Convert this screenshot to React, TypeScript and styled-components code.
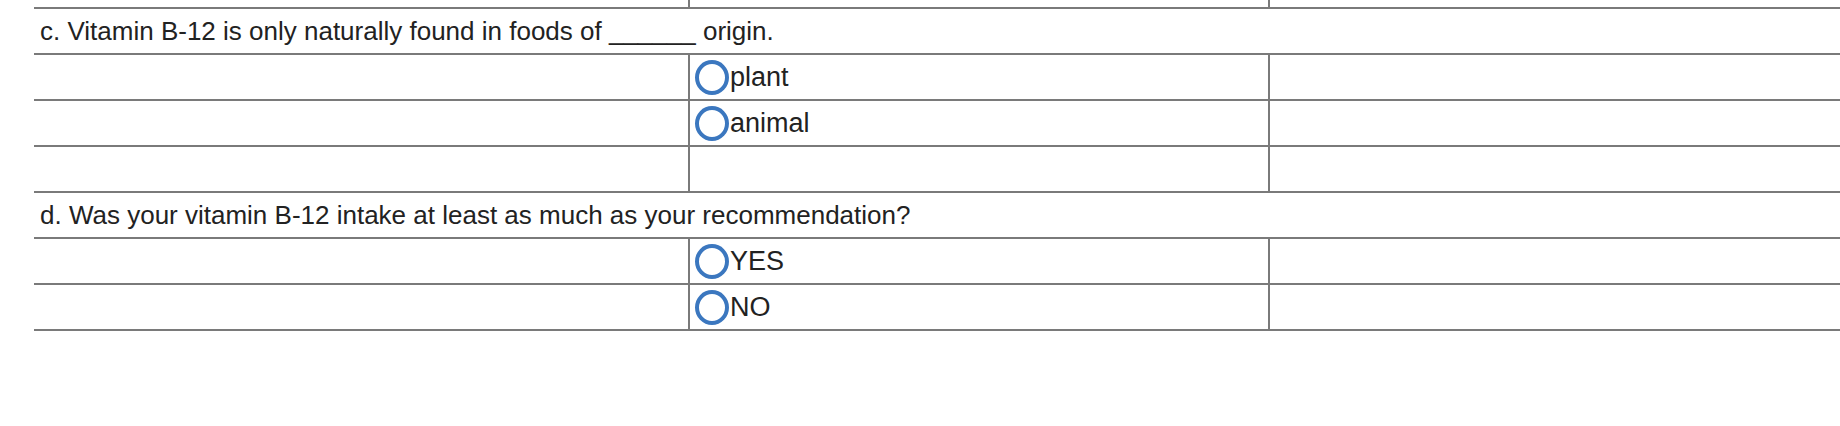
import React from "react";
import styled, { createGlobalStyle } from "styled-components";

const GlobalStyle = createGlobalStyle`
  html, body {
    margin: 0;
    padding: 0;
    background: #ffffff;
    overflow: hidden;
  }
  body {
    font-family: "Liberation Sans", Arial, sans-serif;
    color: #222222;
  }
`;

const LINE = "#7a7a7a";

const Sheet = styled.div`
  display: flex;
  flex-direction: column;
  padding-left: 34px;
  width: 100%;
  box-sizing: border-box;
`;

const Row = styled.div<{ $h?: number }>`
  display: grid;
  grid-template-columns: 656px 580px 1fr;
  height: ${(p) => (p.$h ?? 44) + 2}px;
  box-sizing: border-box;
  border-bottom: 2px solid ${LINE};
`;

const QuestionRow = styled.div`
  display: flex;
  align-items: center;
  height: 46px;
  box-sizing: border-box;
  border-bottom: 2px solid ${LINE};
  padding-left: 6px;
  font-size: 26px;
  line-height: 30px;
  white-space: nowrap;
`;

const Cell = styled.div<{ $divider?: boolean }>`
  display: flex;
  align-items: center;
  box-sizing: border-box;
  border-right: ${(p) => (p.$divider ? `2px solid ${LINE}` : "none")};
  padding-left: 5px;
  font-size: 27px;
  line-height: 30px;
  white-space: nowrap;
`;

const Radio = styled.span`
  display: inline-block;
  width: 34px;
  height: 35px;
  box-sizing: border-box;
  border: 4px solid #3b77bf;
  border-radius: 50%;
  flex-shrink: 0;
`;

const OptionLabel = styled.span`
  margin-left: 1px;
`;

type Opt = { label: string };

const OptionRow = ({ label }: Opt) => (
  <Row>
    <Cell $divider />
    <Cell $divider>
      <Radio />
      <OptionLabel>{label}</OptionLabel>
    </Cell>
    <Cell />
  </Row>
);

const EmptyRow = ({ h }: { h?: number }) => (
  <Row $h={h}>
    <Cell $divider />
    <Cell $divider />
    <Cell />
  </Row>
);

export default function App() {
  return (
    <>
      <GlobalStyle />
      <Sheet>
        <EmptyRow h={7} />
        <QuestionRow>c. Vitamin B-12 is only naturally found in foods of ______ origin.</QuestionRow>
        <OptionRow label="plant" />
        <OptionRow label="animal" />
        <EmptyRow />
        <QuestionRow>d. Was your vitamin B-12 intake at least as much as your recommendation?</QuestionRow>
        <OptionRow label="YES" />
        <OptionRow label="NO" />
      </Sheet>
    </>
  );
}
